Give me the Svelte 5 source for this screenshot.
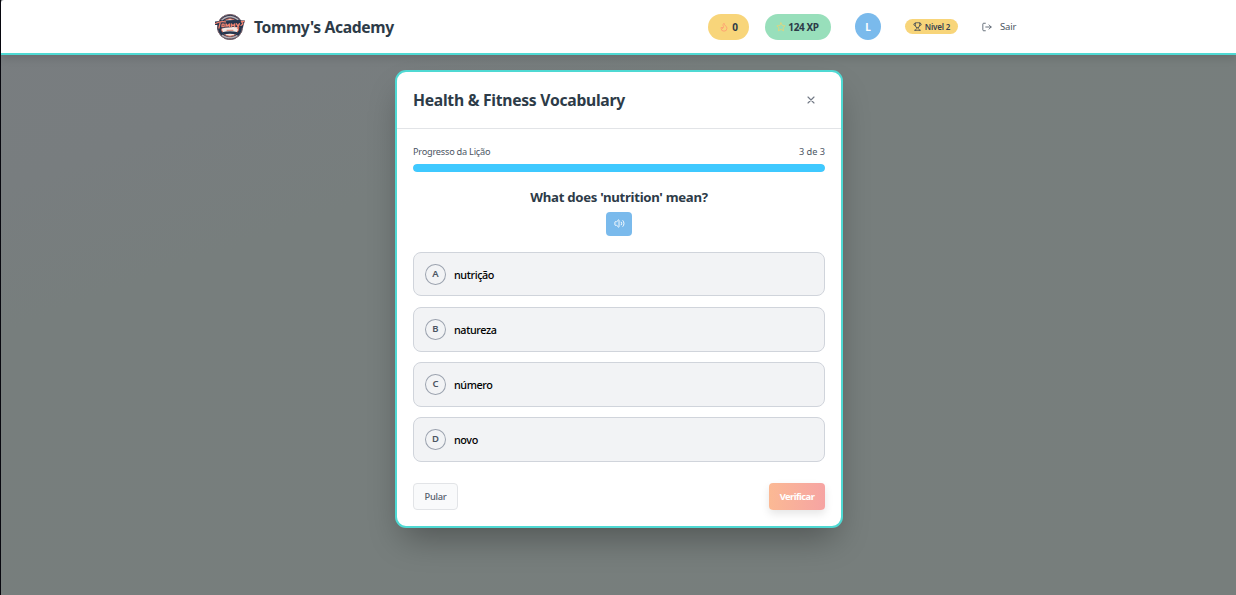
<script>
  const options = [
    { letter: 'A', text: 'nutrição' },
    { letter: 'B', text: 'natureza' },
    { letter: 'C', text: 'número' },
    { letter: 'D', text: 'novo' }
  ];
  const current = 3;
  const total = 3;
</script>

<div class="page">
  <header>
    <div class="brand">
      <svg class="logo" viewBox="0 0 32 28" aria-hidden="true">
        <circle cx="16" cy="14" r="12.6" fill="#26364f" stroke="#7c6068" stroke-width="1" />
        <circle cx="16" cy="14.500" r="8.800" fill="#f5e9e4" stroke="#d7654f" stroke-width="1" />
        <path d="M8 6.800Q16 .5 24 6.800M8.500 22.500Q16 27 23.500 22.500" fill="none" stroke="#b9aeb3" stroke-width="1.600" stroke-dasharray="1.200 .8" />
        <path d="M1 8.600Q15 6 31 7.500L28.800 14.700Q15 12.500 3.400 16.500L4 12H1z" fill="#26364f" />
        <path d="M1.500 10.500Q6 8 11.500 8.900M6.200 9.600L4.900 15M8.200 11.200h1.900v2.500H7.900zM12 13.800v-2.800l1.700 2 1.700-2v2.800M17.300 13.700v-2.800l1.700 2 1.700-2v2.800M22.300 10.700l1.600 2.500 1.500-2.500-2 4.600M30 8.500h-2.600l1.500 2.400-2 1.500" fill="none" stroke="#f08370" stroke-width="1.300" />
        <path d="M8 19.200Q16 17.200 24 19.200L22 21.500Q16 19.800 10 21.500z" fill="#26364f" />
        <path d="M13 17.300h6" stroke="#d7654f" stroke-width=".8" />
      </svg>
      <span class="name">Tommy's Academy</span>
    </div>
    <div class="stats">
      <span class="pill streak">
        <svg viewBox="0 0 24 24" stroke="#ff9b72"><path d="M8.500 14.500A2.500 2.500 0 0 0 11 12c0-1.380-.5-2-1-3-1.072-2.143-.224-4.054 2-6 .5 2.500 2 4.900 4 6.500s3 3.500 3 5.500a7 7 0 1 1-14 0c0-1.153.433-2.294 1-3a2.500 2.500 0 0 0 2.500 2.500z" /></svg>
        <span>0</span>
      </span>
      <span class="pill xp">
        <svg viewBox="0 0 24 24" stroke="#e5d577"><path d="M12 2l3.100 6.300 6.900 1-5 4.900 1.200 6.900-6.200-3.300-6.200 3.300L7 14.200 2 9.300l6.900-1z" /></svg>
        <span>124 XP</span>
      </span>
      <span class="avatar">L</span>
      <span class="level">
        <svg viewBox="0 0 24 24" stroke="#374151"><path d="M6 9H4.500a2.500 2.500 0 0 1 0-5H6M18 9h1.500a2.500 2.500 0 0 0 0-5H18M4 22h16M10 14.660V17c0 .55-.47.98-.97 1.210C7.850 18.750 7 20.240 7 22M14 14.660V17c0 .55.47.98.97 1.210C16.150 18.750 17 20.240 17 22M18 2H6v7a6 6 0 0 0 12 0z" /></svg>
        <span>Nivel 2</span>
      </span>
      <button class="logout">
        <svg viewBox="0 0 24 24" stroke="#4b5563"><path d="M8 3H4a2 2 0 0 0-2 2v14a2 2 0 0 0 2 2h4M17 17l5-5-5-5M22 12H9" /></svg>
        <span>Sair</span>
      </button>
    </div>
  </header>

  <main>
    <section class="modal">
      <div class="head">
        <h2><span>Health &amp; Fitness Vocabulary</span></h2>
        <button class="close" aria-label="Fechar">
          <svg viewBox="0 0 8 8"><path d="M1 1l6 6M7 1L1 7" /></svg>
        </button>
      </div>
      <div class="body">
        <div class="labels"><span class="plabel">Progresso da Lição</span><span>{current} de {total}</span></div>
        <div class="track"><div class="fill" style="width: {(current / total) * 100}%"></div></div>
        <div class="question">
          <h3><span>What does 'nutrition' mean?</span></h3>
          <button class="audio" aria-label="Ouvir">
            <svg viewBox="0 0 24 24" stroke="#fff"><path d="M11 4.700a.7.7 0 0 0-1.200-.5L6.400 7.600A1.400 1.400 0 0 1 5.400 8H3a1 1 0 0 0-1 1v6a1 1 0 0 0 1 1h2.400a1.400 1.400 0 0 1 1 .4l3.400 3.400a.7.7 0 0 0 1.200-.5zM16 9a5 5 0 0 1 0 6M19.400 18.400a9 9 0 0 0 0-12.800" /></svg>
          </button>
        </div>
        <div class="options">
          {#each options as o}
            <button class="option"><span class="letter">{o.letter}</span><span class="answer">{o.text}</span></button>
          {/each}
        </div>
        <div class="actions">
          <button class="skip">Pular</button>
          <button class="verify">Verificar</button>
        </div>
      </div>
    </section>
  </main>
</div>

<style>
  :global(body) { margin: 0; overflow: hidden; }
  .page, .page * { box-sizing: border-box; }
  .page {
    width: 1236px; height: 595px; display: flex; flex-direction: column;
    font-family: "Noto Sans", "Open Sans", sans-serif; color: #2d3b48;
    background: linear-gradient(160deg, #797d80 0%, #787d7f 18%, #777e7d 32%, #777e7c 100%);
    border-left: 1px solid #08080f;
  }
  button { font: inherit; margin: 0; padding: 0; border: 0; background: none; color: inherit; }
  h2, h3 { margin: 0; }
  span { white-space: nowrap; }
  svg { display: block; flex: none; fill: none; stroke-width: 2; stroke-linecap: round; stroke-linejoin: round; }
  header {
    height: 55px; flex: none; background: #fff; border-bottom: 2px solid #4fd9d3; border-top-left-radius: 3px;
    display: flex; align-items: center; justify-content: space-between; padding: 0 210px 0 213px;
    box-shadow: 0 3px 10px rgba(0, 0, 0, .14);
  }
  .brand { display: flex; align-items: center; gap: 8px; }
  .logo { width: 32px; height: 28px; }
  .name { font-size: 15.700px; font-weight: 700; letter-spacing: -.38px; line-height: 24px; padding-top: 1px; }
  .stats { display: flex; align-items: center; }
  .pill { height: 26px; border-radius: 13px; display: flex; align-items: center; justify-content: center; gap: 3px; font-size: 10px; font-weight: 700; }
  .pill svg { width: 10px; height: 10px; }
  .streak { width: 41px; background: #f8d57a; margin-right: 16px; }
  .xp { width: 66px; background: #98dfbb; margin-right: 24px; letter-spacing: -.4px; gap: 2px; padding-right: 1px; }
  .avatar { width: 26px; height: 27px; border-radius: 50%; background: #7abaec; color: #fff; font-size: 10px; font-weight: 700; display: grid; place-items: center; margin-right: 24px; }
  .level { width: 53px; height: 15px; border-radius: 8px; background: #f8d57a; color: #374151; display: flex; align-items: center; justify-content: center; gap: 3px; font-size: 8px; font-weight: 600; letter-spacing: -.18px; margin-right: 24px; }
  .level svg { width: 9px; height: 9px; }
  .logout { display: flex; align-items: center; gap: 8px; font-size: 9.500px; color: #4b5563; width: 44px; letter-spacing: -.15px; }
  .logout svg { width: 10px; height: 10px; }
  main { flex: 1; display: flex; justify-content: center; align-items: flex-start; padding-top: 15px; padding-left: 1px; }
  .modal {
    width: 448px; height: 458px; background: #fff; border: 2px solid #4fd9d3; border-radius: 11px;
    box-shadow: 0 17px 34px -8px rgba(0, 0, 0, .33);
  }
  .head { height: 57px; border-bottom: 1px solid #e2e4e7; display: flex; align-items: center; justify-content: space-between; padding: 0 26px 0 16px; }
  h2 { font-size: 15.700px; line-height: 24px; letter-spacing: -.27px; }
  .close { width: 8px; }
  .close svg { width: 8px; height: 8px; stroke: #737a86; stroke-width: 1.150; }
  .body { padding: 15px 16px 0; }
  .labels { display: flex; justify-content: space-between; font-size: 9.200px; line-height: 16px; color: #4b5563; }
  .plabel { letter-spacing: -.23px; }
  .track { height: 8px; margin-top: 4px; border-radius: 4px; background: #e5e7eb; overflow: hidden; }
  .fill { height: 100%; border-radius: 4px; background: #3fc9ff; }
  .question { padding-top: 15px; display: flex; flex-direction: column; align-items: center; }
  h3 { font-size: 13.200px; line-height: 21px; letter-spacing: -.3px; }
  .audio { margin-top: 4px; width: 26px; height: 24px; border-radius: 4px; background: #7abaec; display: grid; place-items: center; padding-bottom: 1px; }
  .audio svg { width: 11px; height: 11px; }
  .options { margin-top: 16px; display: flex; flex-direction: column; gap: 10.700px; }
  .option { height: 44.450px; display: flex; align-items: center; gap: 8px; padding-left: 11px; background: #f2f3f5; border: 1px solid #d0d4db; border-radius: 8px; }
  .letter { width: 21px; height: 21.300px; border: 1px solid #9ca3af; border-radius: 50%; display: grid; place-items: center; font-size: 9.500px; font-weight: 600; color: #4b5563; line-height: 12px; padding-bottom: 1px; }
  .answer { font-size: 10.800px; font-weight: 500; color: #000; letter-spacing: -.4px; }
  .actions { margin-top: 21.200px; display: flex; justify-content: space-between; font-size: 9.300px; }
  .skip { width: 45px; height: 27px; border: 1px solid #e2e4e7; border-radius: 4px; background: #f9fafb; color: #56606c; font-weight: 500; letter-spacing: -.3px; }
  .verify { width: 56px; height: 27px; border-radius: 4px; color: #fff; font-weight: 700; background: linear-gradient(90deg, #fbb994, #f6a4a3); box-shadow: 0 4px 8px rgba(0, 0, 0, .1); letter-spacing: -.52px; }
</style>
